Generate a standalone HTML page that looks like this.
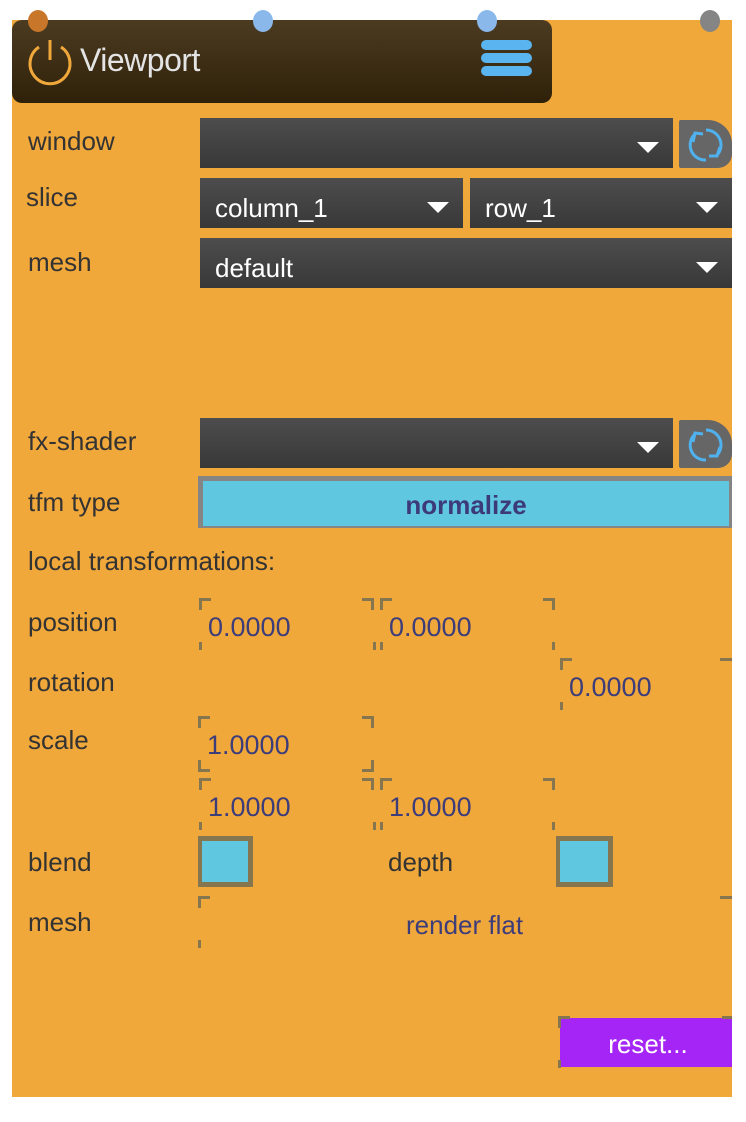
<!DOCTYPE html>
<html><head><meta charset="utf-8"><style>
*{margin:0;padding:0;box-sizing:border-box}
body{width:746px;height:1122px;background:#fff;position:relative;overflow:hidden;font-family:"Liberation Sans",Arial,sans-serif}
.a{position:absolute}
.panel{left:12px;top:20px;width:720px;height:1077px;background:#f1a83b}
.hdr{left:12px;top:20px;width:540px;height:83px;border-radius:10px;background:linear-gradient(#4b3b21,#2f2109)}
.dot{width:20px;height:22px;border-radius:50%;top:10px}
.lbl{color:#333;font-size:26px;left:28px}
.dd{background:linear-gradient(#4d4d4d,#383838);color:#fff;font-size:26px;height:50px;line-height:60px;padding-left:15px}
.dd:after{content:"";position:absolute;right:14px;top:24px;border-left:11px solid transparent;border-right:11px solid transparent;border-top:11px solid #fff}
.rf{width:53px;height:48px;background:#666;border-radius:2px 24px 14px 2px}
.num{color:#3d3d7a;font-size:27px}
.bk{border-color:#857650;border-style:solid;width:12px;height:12px}
.tl{border-width:3px 0 0 3px}.tr{border-width:3px 3px 0 0}
.bl{border-width:0 0 3px 3px}.br{border-width:0 3px 3px 0}
.tk{width:3px;height:8px;background:#857650}
.cb{width:55px;height:51px;border:5px solid #857650;border-left-width:4px;background:#5fc8e0}
</style></head><body>
<div class="a panel"></div>
<div class="a hdr"></div>
<div class="a dot" style="left:28px;background:#c8762a"></div>
<div class="a dot" style="left:253px;background:#8ab8ea"></div>
<div class="a dot" style="left:477px;background:#8ab8ea"></div>
<div class="a dot" style="left:700px;background:#858585"></div>
<svg class="a" style="left:24px;top:34px" width="52" height="54" viewBox="0 0 52 54"><path d="M15 13 A20 20 0 1 0 37 13" fill="none" stroke="#f1a83b" stroke-width="3"/><line x1="26" y1="6" x2="26" y2="26" stroke="#f1a83b" stroke-width="3"/></svg>
<div class="a" style="left:80px;top:42px;color:#e4e4e4;font-size:32px;letter-spacing:-0.5px">Viewport</div>
<div class="a" style="left:481px;top:40px;width:51px;height:10px;border-radius:5px;background:#5ab4f0"></div>
<div class="a" style="left:481px;top:53px;width:51px;height:10px;border-radius:5px;background:#5ab4f0"></div>
<div class="a" style="left:481px;top:66px;width:51px;height:10px;border-radius:5px;background:#5ab4f0"></div>

<div class="a lbl" style="top:126px">window</div>
<div class="a dd" style="left:200px;top:118px;width:473px"></div>
<div class="a rf" style="left:679px;top:120px"><svg width="53" height="48" viewBox="0 0 53 48"><path d="M16 14 A15 15 0 0 0 27 40 M39 34 A15 15 0 0 0 27 10" fill="none" stroke="#4fb2ee" stroke-width="3"/><path d="M14 22 L16 13 L24 14 M41 27 L38 36 L30 36" fill="none" stroke="#4fb2ee" stroke-width="3"/></svg></div>

<div class="a lbl" style="top:182px;left:26px">slice</div>
<div class="a dd" style="left:200px;top:178px;width:263px">column_1</div>
<div class="a dd" style="left:470px;top:178px;width:262px">row_1</div>
<div class="a lbl" style="top:247px">mesh</div>
<div class="a dd" style="left:200px;top:238px;width:532px">default</div>

<div class="a lbl" style="top:426px">fx-shader</div>
<div class="a dd" style="left:200px;top:418px;width:473px"></div>
<div class="a rf" style="left:679px;top:420px"><svg width="53" height="48" viewBox="0 0 53 48"><path d="M16 14 A15 15 0 0 0 27 40 M39 34 A15 15 0 0 0 27 10" fill="none" stroke="#4fb2ee" stroke-width="3"/><path d="M14 22 L16 13 L24 14 M41 27 L38 36 L30 36" fill="none" stroke="#4fb2ee" stroke-width="3"/></svg></div>

<div class="a lbl" style="top:487px">tfm type</div>
<div class="a" style="left:198px;top:476px;width:534px;height:52px;border:5px solid #858585;border-right-width:3px;border-bottom-width:2px;background:#5fc8e0;color:#3d3a7a;font-weight:bold;font-size:26px;text-align:center;line-height:48px">normalize</div>

<div class="a lbl" style="top:546px">local transformations:</div>
<div class="a lbl" style="top:607px">position</div>
<div class="a lbl" style="top:667px">rotation</div>
<div class="a lbl" style="top:725px">scale</div>
<div class="a lbl" style="top:847px">blend</div>
<div class="a lbl" style="top:847px;left:388px">depth</div>
<div class="a lbl" style="top:907px">mesh</div>

<div class="a bk tl" style="left:199px;top:598px"></div><div class="a bk tr" style="left:362px;top:598px"></div>
<div class="a tk" style="left:199px;top:642px"></div><div class="a tk" style="left:373px;top:642px"></div>
<div class="a num" style="left:208px;top:612px">0.0000</div>
<div class="a bk tl" style="left:380px;top:598px"></div><div class="a bk tr" style="left:543px;top:598px"></div>
<div class="a tk" style="left:380px;top:642px"></div><div class="a tk" style="left:552px;top:642px"></div>
<div class="a num" style="left:389px;top:612px">0.0000</div>

<div class="a bk tl" style="left:560px;top:658px"></div><div class="a bk tr" style="left:720px;top:658px;width:12px;border-right:0"></div>
<div class="a tk" style="left:560px;top:702px"></div>
<div class="a num" style="left:569px;top:672px">0.0000</div>

<div class="a bk tl" style="left:198px;top:716px"></div><div class="a bk tr" style="left:362px;top:716px"></div>
<div class="a bk bl" style="left:198px;top:760px"></div><div class="a bk br" style="left:362px;top:760px"></div>
<div class="a num" style="left:207px;top:730px">1.0000</div>

<div class="a bk tl" style="left:199px;top:778px"></div><div class="a bk tr" style="left:362px;top:778px"></div>
<div class="a tk" style="left:199px;top:822px"></div><div class="a tk" style="left:373px;top:822px"></div>
<div class="a num" style="left:208px;top:792px">1.0000</div>
<div class="a bk tl" style="left:380px;top:778px"></div><div class="a bk tr" style="left:543px;top:778px"></div>
<div class="a tk" style="left:380px;top:822px"></div><div class="a tk" style="left:552px;top:822px"></div>
<div class="a num" style="left:389px;top:792px">1.0000</div>

<div class="a cb" style="left:198px;top:836px"></div>
<div class="a cb" style="left:556px;top:836px;width:57px"></div>

<div class="a bk tl" style="left:198px;top:896px"></div><div class="a bk tr" style="left:720px;top:896px;border-right:0"></div>
<div class="a tk" style="left:198px;top:940px"></div>
<div class="a num" style="left:406px;top:910px;font-size:26px">render flat</div>

<div class="a" style="left:560px;top:1018px;width:172px;height:49px;background:#a425f5;color:#fff;font-size:26px;text-align:center;line-height:52px;padding-left:4px">reset...</div>
<div class="a bk tl" style="left:558px;top:1016px"></div>
<div class="a tk" style="left:558px;top:1060px"></div>
<div class="a" style="left:722px;top:1016px;width:10px;height:3px;background:#857650"></div>
</body></html>
